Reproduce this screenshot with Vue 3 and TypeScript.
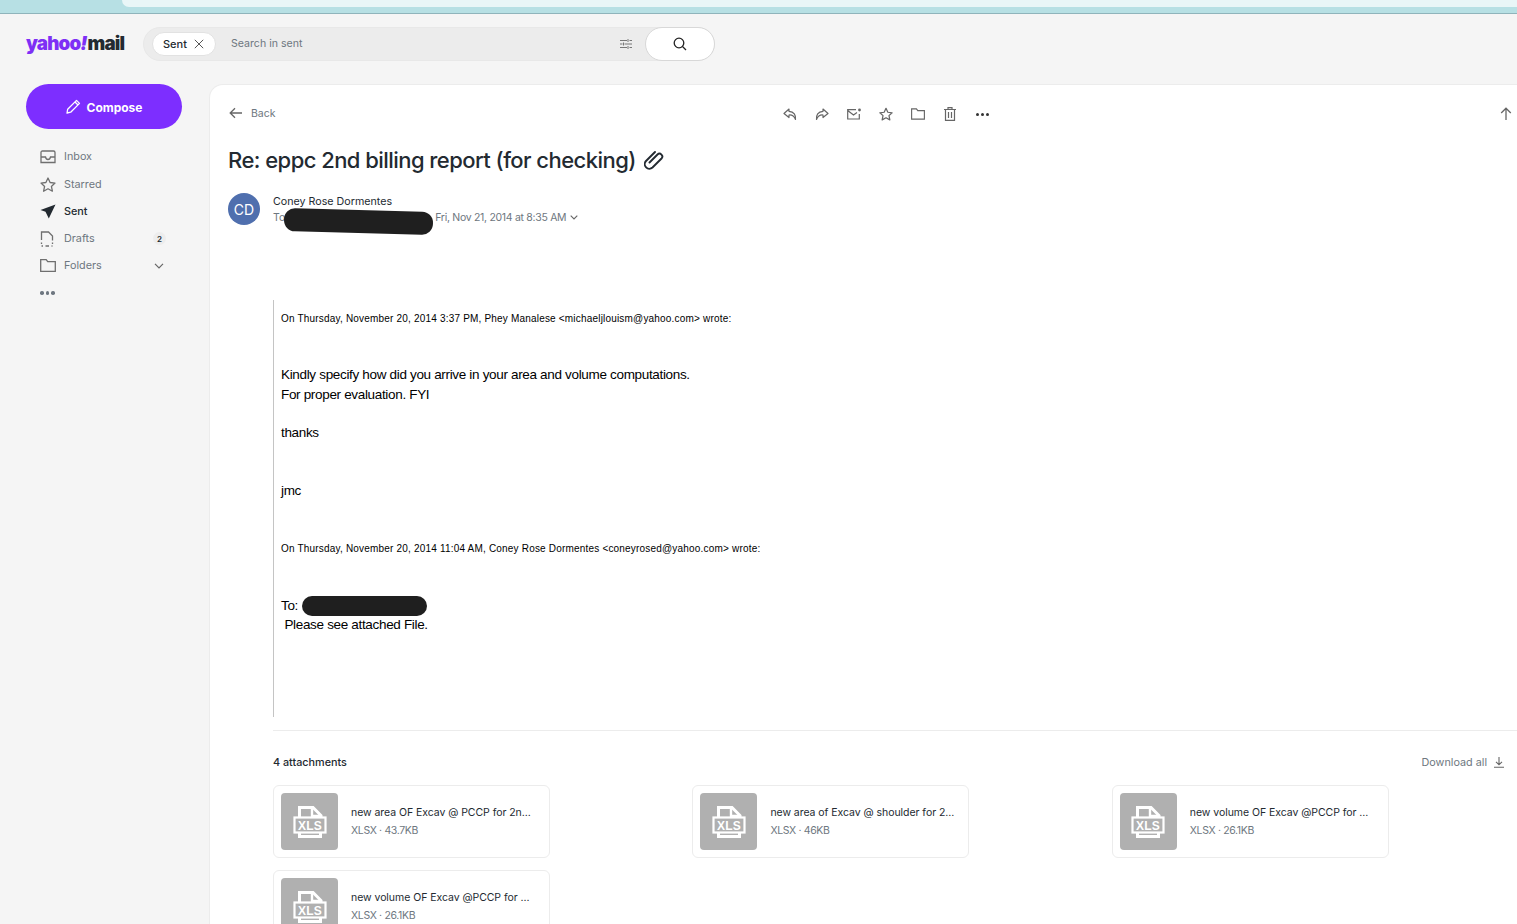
<script setup lang="ts">
interface Att { name: string; meta: string }
const nav = [
  { key: 'inbox', label: 'Inbox' },
  { key: 'star', label: 'Starred' },
  { key: 'sent', label: 'Sent', active: true },
  { key: 'drafts', label: 'Drafts', badge: '2' },
  { key: 'folder', label: 'Folders', chevron: true },
]
const attachments: Att[] = [
  { name: 'new area OF Excav @ PCCP for 2n...', meta: 'XLSX · 43.7KB' },
  { name: 'new area of Excav @ shoulder for 2...', meta: 'XLSX · 46KB' },
  { name: 'new volume OF Excav @PCCP for ...', meta: 'XLSX · 26.1KB' },
  { name: 'new volume OF Excav @PCCP for ...', meta: 'XLSX · 26.1KB' },
]
</script>

<template>
  <div class="page">
    <div class="strip"><div class="strip-panel"></div></div>
    <header class="header">
      <div class="logo"><span class="y">yahoo<i>!</i></span><span class="m">mail</span></div>
      <div class="search">
        <div class="field">
          <span class="chip">Sent
            <svg width="10" height="10" viewBox="0 0 10 10" fill="none" stroke="#555" stroke-width="1"><path d="M.8.8l8.4 8.4M9.200.8L.8 9.200"/></svg>
          </span>
          <span class="placeholder">Search in sent</span>
          <svg class="tune" width="12" height="10" viewBox="0 0 12 10" fill="none" stroke="#777" stroke-width="1"><path d="M0 1.500h7M9.500 1.500H12M8 0v3M0 5h2.500M4.500 5H12M3.500 3.500v3M0 8.500h7M9.500 8.500H12M8 7v3"/></svg>
        </div>
        <button class="go" aria-label="Search">
          <svg width="14" height="14" viewBox="0 0 14 14" fill="none" stroke="#222" stroke-width="1.300"><circle cx="6" cy="6" r="4.800"/><path d="M9.500 9.500l3.500 3.500"/></svg>
        </button>
      </div>
    </header>
    <div class="body">
      <aside class="side">
        <button class="compose">
          <svg width="15" height="15" viewBox="0 0 15 15" fill="none" stroke="#fff" stroke-width="1.300" stroke-linejoin="round"><path d="M1 14l.7-3.800L10.500 1.400l3 3-8.800 8.800L1 14zM9 3l3 3"/></svg>
          <span class="compose-label">Compose</span>
        </button>
        <nav class="nav">
          <a v-for="n in nav" :key="n.key" class="nav-row" :class="{ active: n.active }">
            <span class="nav-icon">
              <svg v-if="n.key === 'inbox'" width="16" height="14" viewBox="0 0 16 14" fill="none" stroke="#6f6f6f" stroke-width="1.300"><path d="M1 7V2.500Q1 1 2.500 1h11Q15 1 15 2.500V7M1 7h4.500Q6 9.500 8 9.500T10.500 7H15M1 7v5.500h14V7"/></svg>
              <svg v-else-if="n.key === 'star'" width="16" height="15" viewBox="0 0 16 15" fill="none" stroke="#6f6f6f" stroke-width="1.300" stroke-linejoin="round"><path d="M8 1l2.100 4.500 4.900.6-3.600 3.300 1 4.800L8 11.800l-4.400 2.400 1-4.800L1 6.100l4.900-.6z"/></svg>
              <svg v-else-if="n.key === 'sent'" width="16" height="15" viewBox="0 0 16 15" fill="#232a31"><path d="M15.500.5L.5 6l5 1.800L8.800 14.500z"/></svg>
              <svg v-else-if="n.key === 'drafts'" width="14" height="16" viewBox="0 0 14 16" fill="none" stroke="#6f6f6f" stroke-width="1.300"><path d="M1.500 9V1h7l4 4v4.500M1.500 11.500V13M12.500 11.500V13M1.500 15H3M5.500 15H9M11.500 15h1"/></svg>
              <svg v-else width="16" height="13" viewBox="0 0 16 13" fill="none" stroke="#6f6f6f" stroke-width="1.300"><path d="M.7.7h5.500l1.500 2h7.600v9.600H.7z"/></svg>
            </span>
            <span class="nav-label">{{ n.label }}</span>
            <span v-if="n.badge" class="badge">{{ n.badge }}</span>
            <svg v-if="n.chevron" class="chev" width="10" height="6" viewBox="0 0 10 6" fill="none" stroke="#666" stroke-width="1.200"><path d="M1 .8l4 4 4-4"/></svg>
          </a>
          <div class="nav-more"><i></i><i></i><i></i></div>
        </nav>
      </aside>

      <main class="main">
        <div class="toolbar">
          <a class="back">
            <svg width="14" height="12" viewBox="0 0 14 12" fill="none" stroke="#666" stroke-width="1.300"><path d="M13 6H1.500M6 1.200L1.200 6 6 10.800"/></svg>
            Back
          </a>
          <div class="actions">
            <svg width="14" height="13" viewBox="0 0 14 13" fill="none" stroke="#666" stroke-width="1.200" stroke-linejoin="round"><path d="M6 1L1 5.500 6 9.500V7c3-.3 5 .8 6.500 4.500.5-4.500-1.500-8-6.500-8.200z"/></svg>
            <svg width="14" height="13" viewBox="0 0 14 13" fill="none" stroke="#666" stroke-width="1.200" stroke-linejoin="round"><path d="M8 1l5 4.500L8 9.500V7c-3-.3-5 .8-6.500 4.500C1 7 3 3.500 8 3.300z"/></svg>
            <svg width="14" height="12" viewBox="0 0 14 12" fill="none" stroke="#666" stroke-width="1.200"><path d="M9 1.600H.7v9.400h11.600V6M.7 2.500L6.500 7 10 4.500"/><circle cx="12.500" cy="2" r="1.400" fill="#666" stroke="none"/></svg>
            <svg width="14" height="14" viewBox="0 0 16 15" fill="none" stroke="#666" stroke-width="1.400" stroke-linejoin="round"><path d="M8 1l2.100 4.500 4.900.6-3.600 3.300 1 4.800L8 11.800l-4.400 2.400 1-4.800L1 6.100l4.900-.6z"/></svg>
            <svg width="14" height="12" viewBox="0 0 16 13" fill="none" stroke="#666" stroke-width="1.300"><path d="M.7.7h5.500l1.500 2h7.600v9.600H.7z"/></svg>
            <svg class="trash" width="12" height="14" viewBox="0 0 12 14" fill="none" stroke="#666" stroke-width="1.200"><path d="M0 2.500h12M4 2.500V.7h4v1.800M1.500 2.500v10.800h9V2.500M4.500 5v6M7.500 5v6"/></svg>
            <span class="dots"><i></i><i></i><i></i></span>
          </div>
          <svg class="up" width="12" height="13" viewBox="0 0 12 13" fill="none" stroke="#666" stroke-width="1.300"><path d="M6 13V1.500M1.200 6L6 1.200 10.800 6"/></svg>
        </div>

        <h1 class="subject">Re: eppc 2nd billing report (for checking)
          <svg width="20" height="20" viewBox="0 0 20 20" fill="none" stroke="#232a31" stroke-width="1.900" stroke-linecap="round"><path d="M5.500 12.500l8-8a2.830 2.830 0 0 1 4 4l-9 9a4.600 4.600 0 0 1-6.500-6.500L11 2"/></svg>
        </h1>

        <div class="sender">
          <div class="avatar">CD</div>
          <div class="who">
            <div class="name">Coney Rose Dormentes</div>
            <div class="to">
              <span>To</span>
              <span class="date">Fri, Nov 21, 2014 at 8:35 AM</span>
              <svg width="8" height="5" viewBox="0 0 8 5" fill="none" stroke="#666" stroke-width="1.100"><path d="M.7.7L4 4 7.300.7"/></svg>
              <span class="redact redact-a"></span>
            </div>
          </div>
        </div>

        <blockquote class="quote">
          <p class="small first">On Thursday, November 20, 2014 3:37 PM, Phey Manalese &lt;michaeljlouism@yahoo.com&gt; wrote:</p>
          <p class="line l1">Kindly specify how did you arrive in your area and volume computations.</p>
          <p class="line">For proper evaluation. FYI</p>
          <p class="line l2">thanks</p>
          <p class="line l3">jmc</p>
          <p class="small second">On Thursday, November 20, 2014 11:04 AM, Coney Rose Dormentes &lt;coneyrosed@yahoo.com&gt; wrote:</p>
          <p class="line l4">To: <span class="redact redact-b"></span></p>
          <p class="line l5">&nbsp;Please see attached File.</p>
        </blockquote>

        <div class="att-section">
          <div class="att-head">
            <span class="att-count">4 attachments</span>
            <a class="download">Download all
              <svg width="10" height="11" viewBox="0 0 10 11" fill="none" stroke="#666" stroke-width="1.100"><path d="M5 0v7.500M2 4.800L5 7.800l3-3M0 10.300h10"/></svg>
            </a>
          </div>
          <div class="att-grid">
            <div v-for="(a, i) in attachments" :key="i" class="card">
              <div class="thumb">
                <svg width="34" height="34" viewBox="0 0 34 34" fill="none">
                  <path d="M6.500 13V2.500h13.500l8 8V13M6.500 27v4.500h21V27" stroke="#fff" stroke-width="3"/>
                  <path d="M19 2v9h9" stroke="#fff" stroke-width="2.400"/>
                  <rect x="1.500" y="12.500" width="31" height="15" fill="#b0b0b0" stroke="#fff" stroke-width="2.200"/>
                  <text x="17" y="24.500" text-anchor="middle" class="xls">XLS</text>
                </svg>
              </div>
              <div class="card-text">
                <div class="card-name">{{ a.name }}</div>
                <div class="card-meta">{{ a.meta }}</div>
              </div>
            </div>
          </div>
        </div>
      </main>
    </div>
  </div>
</template>

<style>
html, body { margin: 0; background: #f5f5f5; overflow: hidden; }
</style>

<style scoped>
.page { width: 1517px; height: 924px; overflow: hidden; display: flex; flex-direction: column; background: #f5f5f5; font-family: Inter, "Liberation Sans", sans-serif; color: #232a31; }
.strip { height: 13px; background: #b7e0e4; border-bottom: 1px solid #8fb4bb; box-sizing: content-box; flex: none; overflow: hidden; padding-left: 122px; }
.strip-panel { height: 7px; background: #e9f6f7; border-bottom-left-radius: 12px; }
.header { height: 70px; flex: none; display: flex; align-items: center; padding: 0 0 10px 26px; box-sizing: border-box; }
.logo { width: 117px; font-size: 18.800px; font-weight: 900; letter-spacing: -0.85px; line-height: 24px; flex: none; margin-top: -1px; }
.logo .y { color: #7e2ff5; }
.logo .y i { font-style: italic; margin-right: 1px; }
.logo .m { color: #232a31; }
.search { display: flex; align-items: center; position: relative; width: 572px; height: 34px; }
.field { flex: 1; height: 34px; background: #ececec; border: 1px solid #e8e8e8; border-radius: 17px; box-sizing: border-box; display: flex; align-items: center; padding-left: 8px; padding-right: 82px; }
.chip { height: 24px; width: 64px; box-sizing: border-box; background: #fff; border: 1px solid #e2e2e2; border-radius: 12px; display: flex; align-items: center; gap: 7px; padding-left: 10px; font-size: 11px; font-weight: 500; flex: none; }
.placeholder { margin: -1px 0 0 15px; font-size: 10.600px; color: #6e7780; flex: 1; }
.tune { flex: none; }
.go { position: absolute; right: 0; top: 0; width: 70px; height: 34px; background: #fff; border: 1px solid #d8d8d8; border-radius: 17px; display: flex; align-items: center; justify-content: center; padding: 0; }
.body { flex: 1; display: flex; min-height: 0; }
.side { width: 209px; flex: none; padding-left: 26px; box-sizing: border-box; }
.compose { width: 156px; height: 45px; border: 0; border-radius: 23px; background: #7d2eff; color: #fff; font: 700 12px Inter, sans-serif; display: flex; align-items: center; justify-content: center; gap: 6px; padding: 0; }
.compose-label { position: relative; top: 1px; }
.nav { margin-top: 14.150px; }
.nav-row { height: 27.250px; display: flex; align-items: center; font-size: 10.800px; color: #6e7780; padding-left: 14px; width: 126px; }
.nav-row.active { color: #232a31; font-weight: 500; }
.nav-icon { width: 24px; display: flex; align-items: center; flex: none; }
.nav-label { flex: 1; }
.badge { width: 13px; height: 13px; border-radius: 50%; background: #ededed; font-size: 8px; font-weight: 600; color: #232a31; display: flex; align-items: center; justify-content: center; }
.chev { margin-right: 2px; }
.nav-more { display: flex; gap: 2px; padding: 12px 0 0 14px; }
.nav-more i { width: 3.500px; height: 3.500px; border-radius: 50%; background: #6e7780; }
.main { flex: 1; min-width: 0; background: #fff; border-top: 1px solid #ececec; border-left: 1px solid #ececec; border-top-left-radius: 14px; padding-left: 18px; box-sizing: border-box; }
.toolbar { height: 56px; display: flex; align-items: center; position: relative; }
.back { display: flex; align-items: center; gap: 8px; font-size: 10.500px; color: #6e7780; margin-left: 1px; }
.actions { position: absolute; left: 555px; top: 1px; height: 56px; display: flex; align-items: center; gap: 18px; }
.trash { margin: 0 1px; }
.dots { display: flex; gap: 2px; margin-left: 1px; }
.dots i { width: 3px; height: 3px; border-radius: 50%; background: #333; }
.up { position: absolute; right: 5px; top: 22px; }
.subject { margin: 0; font-size: 22px; font-weight: 500; line-height: 38px; height: 38px; letter-spacing: -0.55px; color: #232a31; display: flex; align-items: center; gap: 8px; }
.sender { display: flex; margin-top: 14px; gap: 13px; }
.avatar { width: 32px; height: 32px; border-radius: 50%; background: #4f6fae; color: #fff; font-size: 14px; display: flex; align-items: center; justify-content: center; flex: none; }
.who { position: relative; }
.name { font-size: 10.700px; line-height: 16px; margin-top: 1px; color: #232a31; }
.to { position: relative; display: flex; align-items: center; height: 15px; font-size: 10.500px; color: #6e7780; width: 320px; }
.date { margin-left: 150px; margin-right: 4px; white-space: nowrap; letter-spacing: -0.3px; }
.redact { position: absolute; background: #1f1f1f; border-radius: 11px; display: inline-block; }
.redact-a { left: 11px; top: 0; width: 149px; height: 23px; transform: rotate(1.500deg); }
.quote { margin: 75px 0 0 45px; height: 417px; border-left: 1px solid #c4c4c4; padding: 0 0 0 7px; font-family: "Liberation Sans", Arial, sans-serif; color: #000; box-sizing: border-box; position: relative; }
.quote p { margin: 0; }
.small { font-size: 10px; line-height: 14px; white-space: nowrap; letter-spacing: 0.19px; }
.first { padding-top: 12px; }
.line { font-size: 13.500px; line-height: 20px; white-space: nowrap; position: relative; letter-spacing: -0.33px; }
.l1 { margin-top: 39px !important; }
.l2 { margin-top: 18px !important; }
.l3 { margin-top: 38px !important; }
.second { margin-top: 41px !important; }
.l4 { margin-top: 40px !important; }
.l5 { margin-top: -1px !important; }
.redact-b { left: 21px; top: 0; width: 125px; height: 20px; }
.att-section { margin: 13px 0 0 45px; border-top: 1px solid #ececec; }
.att-head { display: flex; justify-content: space-between; align-items: center; height: 54px; padding: 8px 13px 0 0; box-sizing: border-box; }
.att-count { font-size: 10.800px; font-weight: 500; }
.download { display: flex; align-items: center; gap: 7px; font-size: 10.800px; color: #6e7780; }
.att-grid { display: grid; grid-template-columns: repeat(3, 277px); column-gap: 142.400px; row-gap: 12px; }
.card { height: 73px; border: 1px solid #ececec; border-radius: 6px; box-sizing: border-box; display: flex; align-items: center; padding-left: 7px; gap: 13px; background: #fff; }
.thumb { width: 57px; height: 57px; border-radius: 4px; background: #b0b0b0; display: flex; align-items: center; justify-content: center; flex: none; }
.xls { font: 700 12px "Liberation Sans", sans-serif; fill: #fff; letter-spacing: 0.2px; }
.card-text { min-width: 0; padding-top: 2px; }
.card-name { font-size: 10.500px; line-height: 16px; white-space: nowrap; letter-spacing: -0.05px; color: #232a31; }
.card-meta { font-size: 10.500px; line-height: 18px; color: #6e7780; letter-spacing: -0.35px; margin-top: 1px; }
</style>
